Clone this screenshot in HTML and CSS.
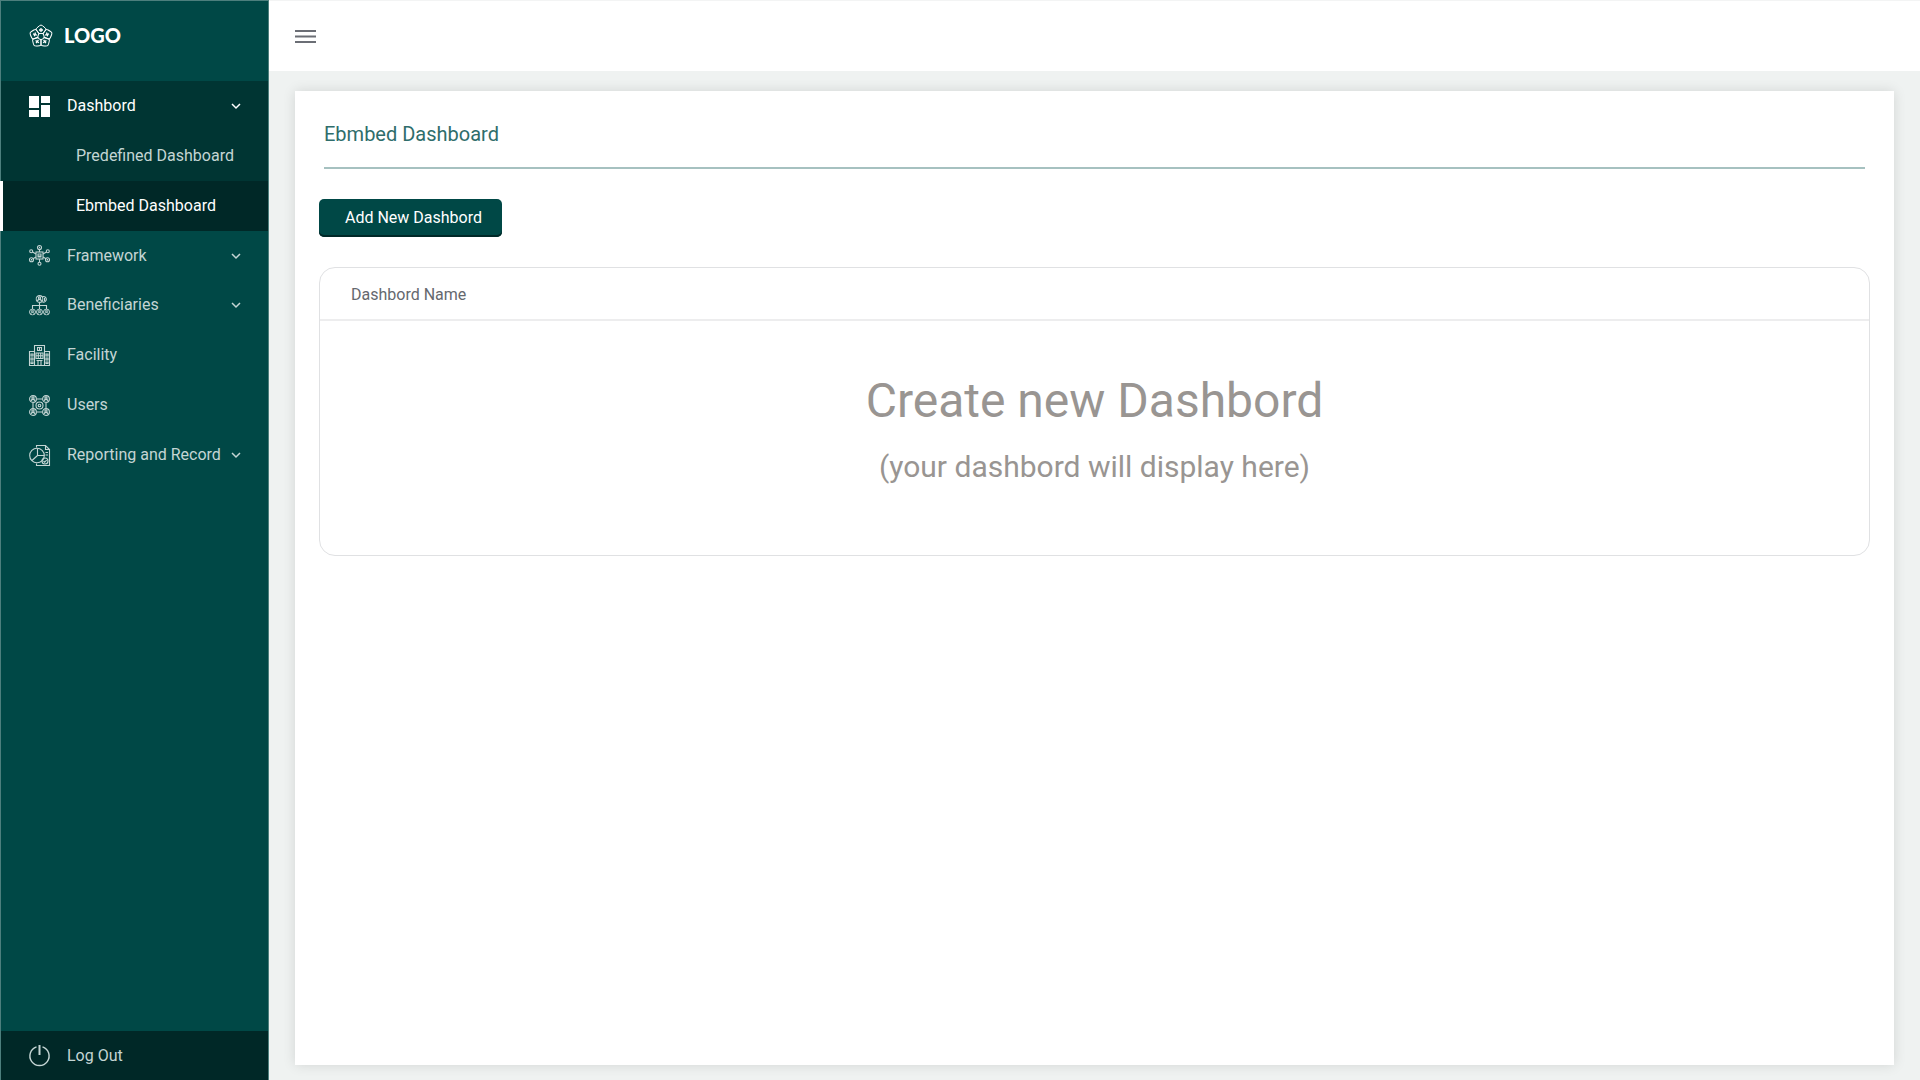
FILE: index.html
```html
<!DOCTYPE html>
<html lang="en">
<head>
<meta charset="utf-8">
<meta name="viewport" content="width=device-width, initial-scale=1">
<title>Ebmbed Dashboard</title>
<link rel="stylesheet" href="styles.css">
</head>
<body>
<svg class="symbols" aria-hidden="true">
  <symbol id="chevron" viewBox="0 0 10 10"><path d="M1 3l4 4 4-4" fill="none" stroke="currentColor" stroke-width="1.5"/></symbol>
  <symbol id="person" viewBox="0 0 8 8"><circle cx="4" cy="4" r="3.4"/><circle cx="4" cy="3" r="1.1"/><path d="M2 6.6c0-3 4-3 4 0"/></symbol>
</svg>
<div class="layout">
  <aside class="sidebar">
    <a class="brand" href="#">
      <svg class="brand-icon" viewBox="0 0 24 24" fill="none" stroke="currentColor" aria-hidden="true">
        <g id="petal"><path d="M12 9.400L9.900 9.600L7.200 5.800Q6.800 4.800 7.800 4Q11 1 12 1T16.200 4Q17.200 4.800 16.800 5.800L14.100 9.600Z"/><path d="M12 4v4M10 6h4" stroke-width="1.300"/></g>
        <use href="#petal" transform="rotate(72 12 12.400)"/>
        <use href="#petal" transform="rotate(144 12 12.400)"/>
        <use href="#petal" transform="rotate(216 12 12.400)"/>
        <use href="#petal" transform="rotate(288 12 12.400)"/>
      </svg>
      <span>LOGO</span>
    </a>
    <nav class="nav" aria-label="Main">
      <div class="group">
        <button class="item current" type="button" aria-expanded="true">
          <svg class="icon" viewBox="0 0 21 21" fill="currentColor" aria-hidden="true"><path d="M0 0h10v12H0zM12 0h9v7h-9zM0 14h10v7H0zM12 9h9v12h-9z"/></svg>
          <span>Dashbord</span>
          <svg class="chevron" aria-hidden="true"><use href="#chevron"/></svg>
        </button>
        <a class="item sub" href="#">Predefined Dashboard</a>
        <a class="item sub active" href="#" aria-current="page">Ebmbed Dashboard</a>
      </div>
      <button class="item" type="button">
        <svg class="icon line" viewBox="0 0 21 21" aria-hidden="true"><rect x="7" y="7" width="7" height="7"/><path d="M9 12V9h3v3zM9 11h3M10.500 4.500V7M10.500 14v3M7 9L3.500 7M14 9l3.500-2M7 12l-3.500 2M14 12l3.500 2"/><circle cx="10.500" cy="2.500" r="2"/><circle cx="10.500" cy="18.700" r="1.500"/><circle cx="2.200" cy="6.200" r="1.500"/><circle cx="18.800" cy="6.200" r="1.500"/><circle cx="2.500" cy="14.700" r="2"/><circle cx="18.500" cy="14.700" r="2"/><path d="M10.500 1.800v1.400M2.500 14v1.400M18.500 14v1.400"/></svg>
        <span>Framework</span>
        <svg class="chevron" aria-hidden="true"><use href="#chevron"/></svg>
      </button>
      <button class="item" type="button">
        <svg class="icon line" viewBox="0 0 21 21" aria-hidden="true"><use href="#person" x="6.500" y="0" width="8" height="8"/><path d="M13.500 1.700a2.800 2.800 0 1 1 0 5.200M15.500 3v3M10.500 8v6M3.500 14v-3.500h14V14"/><use href="#person" x="0" y="13.500" width="7" height="7"/><use href="#person" x="7" y="13.500" width="7" height="7"/><use href="#person" x="14" y="13.500" width="7" height="7"/></svg>
        <span>Beneficiaries</span>
        <svg class="chevron" aria-hidden="true"><use href="#chevron"/></svg>
      </button>
      <a class="item" href="#">
        <svg class="icon line" viewBox="0 0 21 21" aria-hidden="true"><path d="M5.500 20.500V.5h10v20M5.500 6.500h-5v14h20v-14h-5M0 20.500h21M8.500 2.500h4v3h-4zM10.500 2.500v3M7 8h7v5.500H7zM9.300 8v5.500M11.700 8v5.500M7 10.700h7M7.500 15.500h6M9 15.500v5M12 15.500v5M2 9h2v2H2zM2 13h2v2H2zM2 17h2v1.500H2zM17 9h2v2h-2zM17 13h2v2h-2zM17 17h2v1.500h-2z"/></svg>
        <span>Facility</span>
      </a>
      <a class="item" href="#">
        <svg class="icon line" viewBox="0 0 21 21" aria-hidden="true"><use href="#person" x="0" y="0" width="8" height="8"/><use href="#person" x="13" y="0" width="8" height="8"/><use href="#person" x="0" y="13" width="8" height="8"/><use href="#person" x="13" y="13" width="8" height="8"/><circle cx="10.500" cy="10.500" r="3.500"/><circle cx="10.500" cy="10.500" r="1.300"/><path d="M8 4h5M8 17h5M4 8v5M17 8v5"/></svg>
        <span>Users</span>
      </a>
      <button class="item" type="button">
        <svg class="icon line" viewBox="0 0 21 21" aria-hidden="true"><path d="M7.500 2.500v-2h9l4 4v16h-13v-2M16.500.5v4h4M8.500 3.500v7h7M8.500 10.500l-5.500 5M16.500 7.500h2.500M16.500 10h2.500"/><circle cx="8" cy="10.500" r="7.300"/><circle cx="16" cy="16" r="3"/><path d="M14.500 16l1.200 1.200 2-2.200"/></svg>
        <span>Reporting and Record</span>
        <svg class="chevron" aria-hidden="true"><use href="#chevron"/></svg>
      </button>
    </nav>
    <button class="item logout" type="button">
      <svg class="icon" viewBox="0 0 21 21" fill="none" stroke="currentColor" stroke-width="1.400" aria-hidden="true"><path d="M7.500 1.800a9.600 9.600 0 1 0 6 0"/><path d="M10.500 0v10" stroke-width="2"/></svg>
      <span>Log Out</span>
    </button>
  </aside>
  <div class="content">
    <header class="topbar">
      <button class="menu" type="button" aria-label="Menu">
        <svg viewBox="0 0 21 15" fill="none" stroke="currentColor" stroke-width="2" aria-hidden="true"><path d="M0 2h21M0 7.500h21M0 13h21"/></svg>
      </button>
    </header>
    <main class="card">
      <h1>Ebmbed Dashboard</h1>
      <button class="add" type="button">Add New Dashbord</button>
      <table class="list">
        <thead><tr><th scope="col">Dashbord Name</th></tr></thead>
        <tbody><tr><td>
          <p class="empty-title">Create new Dashbord</p>
          <p class="empty-note">(your dashbord will display here)</p>
        </td></tr></tbody>
      </table>
    </main>
  </div>
</div>
</body>
</html>
```
FILE: styles.css
```css
* { box-sizing: border-box; }
body {
  margin: 0;
  background: #eff2f1;
  font: 16px/24px Roboto, "Liberation Sans", sans-serif;
}
button { border: 0; background: none; font: inherit; cursor: pointer; }
a { color: inherit; text-decoration: none; }
.symbols { position: absolute; width: 0; height: 0; }

.layout { display: flex; min-height: 100vh; }
.sidebar {
  flex: 0 0 269px;
  display: flex;
  flex-direction: column;
  border: 1px solid #4d7f7d;
  border-bottom: 0;
  background: #004846;
  color: #c4d5d4;
}
.brand {
  display: flex;
  align-items: flex-start;
  gap: 11px;
  height: 80px;
  padding: 23px 28px;
  color: #fff;
  font: 900 20px/22px Lato, sans-serif;
}
.brand-icon { width: 24px; height: 24px; }
.nav { flex: 1; }
.group { background: #003533; }
.item {
  display: flex;
  align-items: center;
  width: 100%;
  height: 50px;
  padding: 0 27px 0 28px;
  color: inherit;
  text-align: left;
}
.group + .item { height: 49px; }
.icon { flex: none; width: 21px; height: 21px; margin-right: 17px; overflow: visible; }
.line { fill: none; stroke: currentColor; stroke-width: 1.1; }
.item span { white-space: nowrap; }
.chevron { flex: none; width: 10px; height: 10px; margin-left: auto; }
.current, .active { color: #fff; }
.sub { padding-left: 75px; }
.active {
  width: auto;
  margin-left: -1px;
  padding-left: 73px;
  border-left: 3px solid #fff;
  background: #002827;
}
.logout { height: 49px; background: #002827; }

.content { flex: 1; min-width: 0; display: flex; flex-direction: column; }
.topbar {
  display: flex;
  align-items: center;
  height: 71px;
  padding: 0 26px;
  border-top: 1px solid #f3f4f4;
  background: #fff;
}
.menu { padding: 0; color: #6b6e75; }
.menu svg { display: block; width: 21px; height: 15px; }
.card {
  flex: 1;
  margin: 20px 26px 15px;
  padding: 31px 24px;
  background: #fff;
  box-shadow: 0 0 12px rgba(0, 0, 0, .12);
}
h1 {
  margin: 0 5px 30px;
  padding-bottom: 21px;
  border-bottom: 2px solid #a6c1c0;
  color: #2f6d6b;
  font-size: 20px;
  font-weight: 400;
  line-height: 24px;
}
.add {
  display: block;
  height: 38px;
  padding: 0 20px 0 26px;
  border-radius: 5px;
  background: #004846;
  box-shadow: inset 0 -2px #002827;
  color: #fff;
}
.list {
  width: 100%;
  margin-top: 30px;
  border: 1px solid #e0e1e3;
  border-radius: 16px;
  border-spacing: 0;
}
th {
  height: 53px;
  padding: 2px 31px 0;
  border-bottom: 2px solid #ededee;
  color: #65686e;
  font-weight: 400;
  text-align: left;
}
td { height: 234px; padding: 0 0 14px; color: #999592; text-align: center; }
p { margin: 0; }
.empty-title { font-size: 48px; line-height: 72px; }
.empty-note { font-size: 30px; line-height: 60px; }
```
